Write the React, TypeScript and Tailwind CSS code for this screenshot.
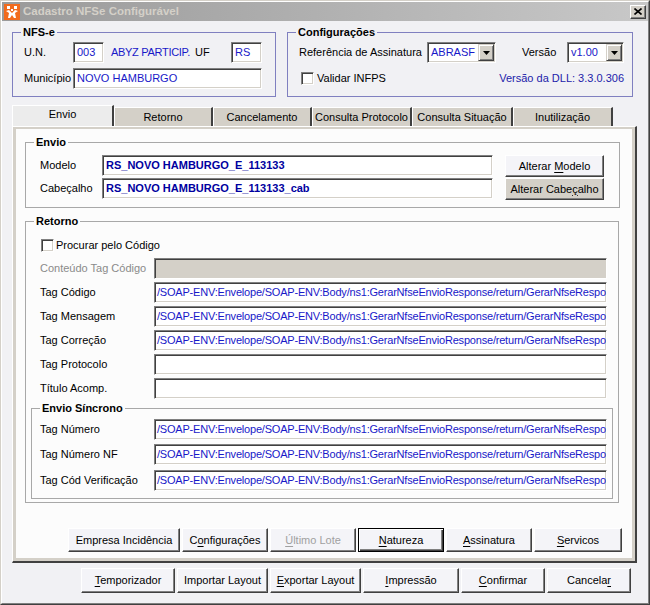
import React from "react";

const blue = "text-[#1818c8]";

function Sunken({
  className = "",
  children,
}: {
  className?: string;
  children?: React.ReactNode;
}) {
  return (
    <div
      className={`flex items-center overflow-hidden whitespace-nowrap p-px border border-t-[#808080] border-l-[#808080] border-r-white border-b-white shadow-[inset_1px_1px_#404040,inset_-1px_-1px_#d4d0c8] ${className}`}
    >
      {children}
    </div>
  );
}

function Check() {
  return (
    <div className="w-[13px] h-[13px] shrink-0 bg-white border border-t-[#808080] border-l-[#808080] border-r-white border-b-white shadow-[inset_1px_1px_#404040,inset_-1px_-1px_#d4d0c8]" />
  );
}

function Select({ className, value }: { className: string; value: string }) {
  return (
    <Sunken className={`h-[21px] bg-white ${className}`}>
      <span className={`flex-1 pl-[2px] ${blue}`}>{value}</span>
      <div className="w-[16px] h-[17px] flex items-center justify-center bg-[#d4d0c8] border border-t-[#d4d0c8] border-l-[#d4d0c8] border-r-[#404040] border-b-[#404040] shadow-[inset_1px_1px_#fff,inset_-1px_-1px_#808080]">
        <svg width="7" height="4" viewBox="0 0 7 4">
          <path d="M0 0h7L3.5 4z" fill="#000" />
        </svg>
      </div>
    </Sunken>
  );
}

function Btn({
  className,
  children,
  focused,
  gray,
  disabled,
}: {
  className: string;
  children: React.ReactNode;
  focused?: boolean;
  gray?: boolean;
  disabled?: boolean;
}) {
  const edge = focused
    ? "border border-black shadow-[inset_1px_1px_#fff,inset_-1px_-1px_#404040,inset_-2px_-2px_#808080]"
    : "border border-t-white border-l-white border-r-[#404040] border-b-[#404040] shadow-[inset_-1px_-1px_#808080]";
  return (
    <div
      className={`flex items-center justify-center whitespace-nowrap ${edge} ${
        gray ? "bg-[#d4d0c8]" : "bg-[#f4f4f8]"
      } ${disabled ? "text-[#a0a0a0]" : "text-black"} ${className}`}
    >
      <span>{children}</span>
    </div>
  );
}

function Group({
  title,
  className,
  legendBg,
  children,
}: {
  title: string;
  className: string;
  legendBg: string;
  children: React.ReactNode;
}) {
  return (
    <div className={`relative border ${className}`}>
      <span
        className={`absolute left-[8px] top-[-8px] px-[2px] font-bold leading-[14px] ${legendBg}`}
      >
        {title}
      </span>
      {children}
    </div>
  );
}

const K = ({ children }: { children: React.ReactNode }) => (
  <span className="underline underline-offset-[2px]">{children}</span>
);

const base = "/SOAP-ENV:Envelope/SOAP-ENV:Body/ns1:GerarNfseEnvioResponse/return/GerarNfseResposta";

const retornoRows = [
  { label: "Tag Código", value: `${base}/ListaMensagemRetorno/MensagemRetorno/Codigo` },
  { label: "Tag Mensagem", value: `${base}/ListaMensagemRetorno/MensagemRetorno/Mensagem` },
  { label: "Tag Correção", value: `${base}/ListaMensagemRetorno/MensagemRetorno/Correcao` },
  { label: "Tag Protocolo", value: "" },
  { label: "Título Acomp.", value: "" },
];

const sincronoRows = [
  { label: "Tag Número", value: `${base}/ListaNfse/CompNfse/Nfse/InfNfse/Numero`, mt: "" },
  { label: "Tag Número NF", value: `${base}/ListaNfse/CompNfse/Nfse/InfNfse/NumeroNf`, mt: "mt-[4px]" },
  {
    label: "Tag Cód Verificação",
    value: `${base}/ListaNfse/CompNfse/Nfse/InfNfse/CodigoVerificacao`,
    mt: "mt-[5px]",
  },
];

const tabs = [
  { label: "Envio", w: "w-[102px]" },
  { label: "Retorno", w: "w-[99px]" },
  { label: "Cancelamento", w: "w-[99px]" },
  { label: "Consulta Protocolo", w: "w-[100px]" },
  { label: "Consulta Situação", w: "w-[101px]" },
  { label: "Inutilização", w: "w-[100px]" },
];

export default function App() {
  return (
    <div className="w-[650px] h-[605px] font-['Liberation_Sans',Arial,sans-serif] text-[11px] text-black border border-t-[#d4d0c8] border-l-[#d4d0c8] border-r-[#404040] border-b-[#404040]">
      <div className="h-full flex flex-col border border-t-white border-l-white border-r-[#808080] border-b-[#808080] bg-[#f1f1f4]">
        {/* title bar */}
        <div className="h-[19px] shrink-0 flex items-center pl-[2px] pr-[2px] bg-gradient-to-r from-[#9a9a9a] to-[#c8c8c8]">
          <svg width="16" height="16" viewBox="0 0 16 16">
            <rect width="16" height="16" fill="#f26b1d" />
            <rect x="3" y="2" width="3" height="3" fill="#fff" />
            <rect x="10" y="2" width="3" height="3" fill="#fff" />
            <path d="M2 7l3-1 3 3 3-3 3 1-3 2 1 5h-2l-2-3-2 3H4l1-5z" fill="#fff" />
            <rect x="7" y="5" width="2" height="2" fill="#fff" />
          </svg>
          <span className="ml-[3px] text-[11.5px] font-bold text-[#d4d0c8]">
            Cadastro NFSe Configurável
          </span>
          <div className="ml-auto w-[16px] h-[14px] flex items-center justify-center bg-[#d4d0c8] border border-t-white border-l-white border-r-[#404040] border-b-[#404040] shadow-[inset_-1px_-1px_#808080]">
            <svg width="8" height="7" viewBox="0 0 8 7">
              <path d="M0.5 0.5l7 6M7.5 0.5l-7 6" stroke="#000" strokeWidth="1.6" />
            </svg>
          </div>
        </div>

        {/* top groups */}
        <div className="flex mt-[11px] ml-[10px]">
          <Group
            title="NFS-e"
            legendBg="bg-[#f1f1f4]"
            className="w-[264px] h-[65px] border-[#8080c0] pt-[9px] pl-[11px]"
          >
            <div className="flex items-center h-[21px]">
              <span className="w-[49px]">U.N.</span>
              <Sunken className="w-[31px] h-[21px] bg-white">
                <span className={`pl-[2px] ${blue}`}>003</span>
              </Sunken>
              <span className={`ml-[7px] w-[84px] whitespace-nowrap tracking-[-0.3px] ${blue}`}>
                ABYZ PARTICIP.
              </span>
              <span className="w-[36px]">UF</span>
              <Sunken className="w-[31px] h-[21px] bg-white">
                <span className={`pl-[2px] ${blue}`}>RS</span>
              </Sunken>
            </div>
            <div className="flex items-center h-[21px] mt-[5px]">
              <span className="w-[49px]">Município</span>
              <Sunken className="w-[189px] h-[21px] bg-white">
                <span className={`pl-[2px] ${blue}`}>NOVO HAMBURGO</span>
              </Sunken>
            </div>
          </Group>

          <Group
            title="Configurações"
            legendBg="bg-[#f1f1f4]"
            className="ml-[11px] w-[346px] h-[65px] border-[#8080c0] pt-[9px] pl-[11px] pr-[8px]"
          >
            <div className="flex items-center h-[21px]">
              <span className="w-[128px]">Referência de Assinatura</span>
              <Select className="w-[69px]" value="ABRASF" />
              <span className="ml-[26px] w-[45px]">Versão</span>
              <Select className="w-[57px]" value="v1.00" />
            </div>
            <div className="flex items-center h-[21px] mt-[5px]">
              <div className="ml-[2px]">
                <Check />
              </div>
              <span className="ml-[3px]">Validar INFPS</span>
              <span className="ml-auto text-[#2222aa]">Versão da DLL: 3.3.0.306</span>
            </div>
          </Group>
        </div>

        {/* tabs */}
        <div className="flex items-end ml-[10px] mt-[8px] h-[21px]">
          {tabs.map((t, i) =>
            i === 0 ? (
              <div
                key={t.label}
                className={`${t.w} h-[21px] pb-[3px] flex items-center justify-center bg-[#ececec] border-t border-l border-t-white border-l-white border-r-2 border-r-[#404040]`}
              >
                {t.label}
              </div>
            ) : (
              <div
                key={t.label}
                className={`${t.w} h-[19px] flex items-center justify-center whitespace-nowrap bg-[#d4d0c8] border-t border-l border-t-white border-l-white border-r-2 border-r-[#404040]`}
              >
                {t.label}
              </div>
            )
          )}
        </div>

        {/* tab panel */}
        <div className="ml-[10px] w-[625px] h-[437px] shrink-0 border-t border-l border-t-white border-l-white border-r-2 border-b-2 border-r-[#404040] border-b-[#404040]">
          <div className="h-full flex flex-col border-[3px] border-t-2 border-[#d4d0c8] bg-[#fcfcfc]">
            <Group
              title="Envio"
              legendBg="bg-[#fcfcfc]"
              className="ml-[9px] mt-[13px] w-[595px] h-[66px] border-[#a8a8a8] pt-[12px] pl-[14px]"
            >
              <div className="flex items-start h-[22px]">
                <span className="w-[62px] leading-[21px]">Modelo</span>
                <Sunken className="w-[391px] h-[21px] bg-white">
                  <span className="pl-[2px] font-bold text-[#0000a0]">
                    RS_NOVO HAMBURGO_E_113133
                  </span>
                </Sunken>
                <Btn className="ml-[12px] w-[99px] h-[22px]">
                  Alterar <K>M</K>odelo
                </Btn>
              </div>
              <div className="flex items-start h-[22px] mt-px">
                <span className="w-[62px] leading-[21px]">Cabeçalho</span>
                <Sunken className="w-[391px] h-[21px] bg-white">
                  <span className="pl-[2px] font-bold text-[#0000a0]">
                    RS_NOVO HAMBURGO_E_113133_cab
                  </span>
                </Sunken>
                <Btn gray className="ml-[12px] w-[99px] h-[22px]">
                  Alterar Cabe<K>ç</K>alho
                </Btn>
              </div>
            </Group>

            <Group
              title="Retorno"
              legendBg="bg-[#fcfcfc]"
              className="ml-[9px] mt-[13px] w-[594px] h-[282px] border-[#a8a8a8] pt-[17px] pl-[5px]"
            >
              <div className="flex items-center h-[13px] ml-[10px]">
                <Check />
                <span className="ml-[2px]">Procurar pelo Código</span>
              </div>
              <div className="pl-[9px] mt-[6px] flex flex-col gap-[3px]">
                <div className="flex items-center h-[21px]">
                  <span className="w-[114px] text-[#8a8a8a]">Conteúdo Tag Código</span>
                  <Sunken className="w-[453px] h-[21px] bg-[#d4d0c8]" />
                </div>
                {retornoRows.map((r) => (
                  <div key={r.label} className="flex items-center h-[21px]">
                    <span className="w-[114px]">{r.label}</span>
                    <Sunken className="w-[453px] h-[21px] bg-white">
                      <span className={`pl-[1px] tracking-[-0.2px] ${blue}`}>{r.value}</span>
                    </Sunken>
                  </div>
                ))}
              </div>

              <Group
                title="Envio Síncrono"
                legendBg="bg-[#fcfcfc]"
                className="mt-[9px] w-[582px] h-[91px] border-[#a8a8a8] pt-[10px] pl-[8px]"
              >
                {sincronoRows.map((r) => (
                  <div key={r.label} className={`flex items-center h-[21px] ${r.mt}`}>
                    <span className="w-[114px]">{r.label}</span>
                    <Sunken className="w-[453px] h-[21px] bg-white">
                      <span className={`pl-[1px] tracking-[-0.2px] ${blue}`}>{r.value}</span>
                    </Sunken>
                  </div>
                ))}
              </Group>
            </Group>

            <div className="flex gap-[2px] mt-[25px] ml-[52px] h-[24px]">
              <Btn className="w-[112px]">Empresa Incidência</Btn>
              <Btn className="w-[86px]">
                C<K>o</K>nfigurações
              </Btn>
              <Btn disabled className="w-[86px]">
                <K>Ú</K>ltimo Lote
              </Btn>
              <Btn focused className="w-[86px]">
                <K>N</K>atureza
              </Btn>
              <Btn className="w-[86px]">
                <K>A</K>ssinatura
              </Btn>
              <Btn className="w-[88px]">
                <K>S</K>ervicos
              </Btn>
            </div>
          </div>
        </div>

        {/* bottom buttons */}
        <div className="flex gap-[2px] mt-[5px] ml-[79px] h-[25px]">
          <Btn className="w-[94px]">
            <K>T</K>emporizador
          </Btn>
          <Btn className="w-[91px]">Importar Layout</Btn>
          <Btn className="w-[91px]">
            <K>E</K>xportar Layout
          </Btn>
          <Btn className="w-[96px]">
            <K>I</K>mpressão
          </Btn>
          <Btn className="w-[84px]">
            <K>C</K>onfirmar
          </Btn>
          <Btn className="w-[84px]">
            Cancela<K>r</K>
          </Btn>
        </div>
      </div>
    </div>
  );
}
